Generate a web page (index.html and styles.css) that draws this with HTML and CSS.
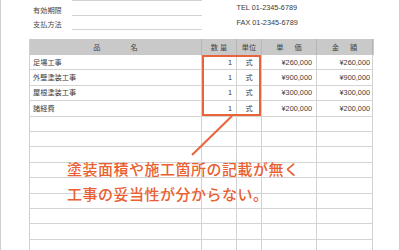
FILE: index.html
```html
<!DOCTYPE html>
<html lang="ja">
<head>
<meta charset="utf-8">
<link rel="stylesheet" href="styles.css">
</head>
<body>
<div class="page">
  <div class="info">
    <div class="info-left">
      <div class="info-row first"><span class="label">有効期限</span><span class="value"></span></div>
      <div class="info-row"><span class="label">支払方法</span><span class="value"></span></div>
    </div>
    <div class="info-right">
      <div class="contact">TEL 01-2345-6789</div>
      <div class="contact">FAX 01-2345-6789</div>
    </div>
  </div>

  <div class="table">
    <div class="row head">
      <div class="cell c-name"><span class="wide">品名</span></div>
      <div class="cell c-qty"><span class="narrow">数量</span></div>
      <div class="cell c-unit">単位</div>
      <div class="cell c-price"><span class="mid">単価</span></div>
      <div class="cell c-amount"><span class="mid">金額</span></div>
    </div>
    <div class="row">
      <div class="cell c-name">足場工事</div>
      <div class="cell c-qty num">1</div>
      <div class="cell c-unit">式</div>
      <div class="cell c-price num">¥260,000</div>
      <div class="cell c-amount num">¥260,000</div>
    </div>
    <div class="row">
      <div class="cell c-name">外壁塗装工事</div>
      <div class="cell c-qty num">1</div>
      <div class="cell c-unit">式</div>
      <div class="cell c-price num">¥900,000</div>
      <div class="cell c-amount num">¥900,000</div>
    </div>
    <div class="row">
      <div class="cell c-name">屋根塗装工事</div>
      <div class="cell c-qty num">1</div>
      <div class="cell c-unit">式</div>
      <div class="cell c-price num">¥300,000</div>
      <div class="cell c-amount num">¥300,000</div>
    </div>
    <div class="row">
      <div class="cell c-name">諸経費</div>
      <div class="cell c-qty num">1</div>
      <div class="cell c-unit">式</div>
      <div class="cell c-price num">¥200,000</div>
      <div class="cell c-amount num">¥200,000</div>
    </div>
    <div class="row"><div class="cell"></div><div class="cell"></div><div class="cell"></div><div class="cell"></div><div class="cell"></div></div>
    <div class="row"><div class="cell"></div><div class="cell"></div><div class="cell"></div><div class="cell"></div><div class="cell"></div></div>
    <div class="row"><div class="cell"></div><div class="cell"></div><div class="cell"></div><div class="cell"></div><div class="cell"></div></div>
    <div class="row"><div class="cell"></div><div class="cell"></div><div class="cell"></div><div class="cell"></div><div class="cell"></div></div>
    <div class="row"><div class="cell"></div><div class="cell"></div><div class="cell"></div><div class="cell"></div><div class="cell"></div></div>
    <div class="row"><div class="cell"></div><div class="cell"></div><div class="cell"></div><div class="cell"></div><div class="cell"></div></div>
    <div class="row"><div class="cell"></div><div class="cell"></div><div class="cell"></div><div class="cell"></div><div class="cell"></div></div>
    <div class="row"><div class="cell"></div><div class="cell"></div><div class="cell"></div><div class="cell"></div><div class="cell"></div></div>
    <div class="row"><div class="cell"></div><div class="cell"></div><div class="cell"></div><div class="cell"></div><div class="cell"></div></div>
  </div>

  <div class="highlight"></div>
  <svg class="pointer" width="400" height="250" viewBox="0 0 400 250" aria-hidden="true">
    <line x1="232" y1="116" x2="192" y2="155" stroke="#e9643a" stroke-width="2"/>
  </svg>
  <div class="callout">塗装面積や施工箇所の記載が無く<br>工事の妥当性が分からない。</div>
</div>
</body>
</html>
```

FILE: styles.css
```css
html, body {
  margin: 0;
  padding: 0;
  background: #ffffff;
}

.page {
  position: relative;
  width: 400px;
  height: 250px;
  box-sizing: border-box;
  border-left: 1px solid #cfcfcf;
  border-right: 1px solid #cfcfcf;
  padding-left: 28px;
  overflow: hidden;
  font-family: "Noto Sans CJK JP", sans-serif;
  color: #3a3a3a;
}

.info {
  display: flex;
  height: 30px;
}

.info-left {
  width: 173px;
}

.info-row {
  display: flex;
  align-items: flex-end;
  height: 14px;
}

.info-row.first {
  height: 16px;
}

.label {
  width: 39px;
  padding-left: 4px;
  padding-bottom: 1.5px;
  font-size: 7.2px;
  line-height: 9px;
  color: #444;
}

.value {
  flex: 1;
  height: 13px;
  border-bottom: 1px solid #d2d2d2;
}

.info-row.first .value {
  height: 14px;
  border-top: 1px solid #d2d2d2;
}

.info-right {
  margin-left: 34.5px;
}

.contact {
  font-family: "Liberation Sans", Arial, sans-serif;
  font-size: 7.3px;
  line-height: 15px;
  color: #3a3a3a;
}

.table {
  margin-top: 9px;
  width: 344px;
  border-left: 1px solid #cfcfcf;
}

.row {
  display: grid;
  grid-template-columns: 172px 35px 25px 55px 56px;
  height: 15.4px;
}

.row.head {
  height: 16px;
  background: #c9c9c9;
}

.cell {
  display: flex;
  align-items: center;
  box-sizing: border-box;
  border-right: 1px solid #d2d2d2;
  border-bottom: 1px solid #d4d4d4;
  font-size: 7.2px;
  line-height: 9px;
  padding: 0 4px;
  white-space: nowrap;
}

.head .cell {
  justify-content: center;
  border-right-color: #b7b7b7;
  border-bottom: none;
  color: #444;
  padding: 0;
}

.wide {
  letter-spacing: 30px;
  padding-left: 30px;
}

.narrow {
  letter-spacing: 2px;
  padding-left: 2px;
}

.mid {
  letter-spacing: 11px;
  padding-left: 11px;
}

.c-name {
  padding-left: 3px;
}

.c-unit {
  justify-content: center;
  padding: 0;
}

.num {
  justify-content: flex-end;
  font-family: "Liberation Sans", Arial, sans-serif;
  font-size: 7.3px;
}

.c-amount.num {
  padding-right: 2px;
}

.highlight {
  position: absolute;
  left: 201px;
  top: 55px;
  width: 58.5px;
  height: 61px;
  box-sizing: border-box;
  border: 2px solid #e9643a;
}

.pointer {
  position: absolute;
  left: -1px;
  top: 0;
}

.callout {
  position: absolute;
  left: 66px;
  top: 156px;
  font-family: "Noto Sans CJK JP", sans-serif;
  font-weight: 500;
  font-size: 15px;
  line-height: 25px;
  letter-spacing: 0.5px;
  color: #ea6030;
  white-space: nowrap;
}
```
